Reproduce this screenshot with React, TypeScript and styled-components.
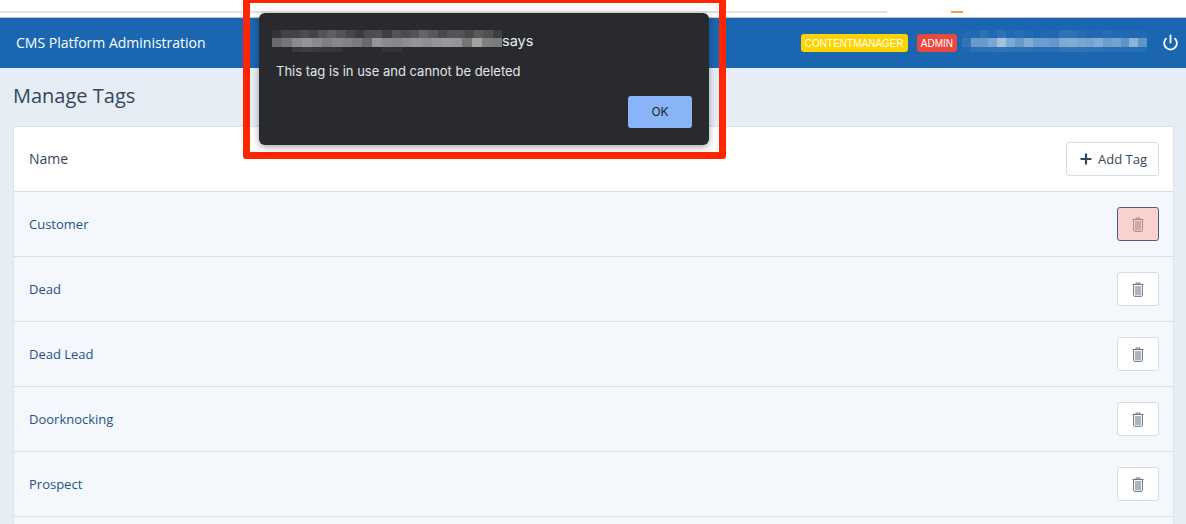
import React from 'react';
import styled, { createGlobalStyle } from 'styled-components';
import { Plus, Power } from 'lucide-react';

const tags = ['Customer', 'Dead', 'Dead Lead', 'Doorknocking', 'Prospect'];

const topBlur = [.05, .12, .12, .16, .12, .2, .25, .2, .14, .08, .16, .18, .1, .2, .16, .2, .28, .22, .14, .2, .2, .14, .22, .18, .1];
const midBlur = [.3, .36, .46, .5, .46, .4, .44, .42, .38, .3, .5, .46, .44, .48, .5, .48, .5, .52, .5, .36, .56, .4, .38];
const lowBlur = [0, 0, .08, .1, .08, .06, .06, 0, 0, 0, 0, .05, .05, 0, 0, 0, 0, 0, 0, 0, 0, 0, 0];
const userTop = [.03, .03, .08, .03, .08, .03, .05, .03, 0, .03, .03, .08, .08, .05, .03, .03, .05, .03, .03, .03, .03];
const userMid = [.1, .34, .34, .42, .6, .44, .34, .46, .36, .36, .32, .44, .46, .42, .4, .46, .36, .4, .3, .5, .3];
const userLow = [.03, .08, .08, .08, .1, .08, .08, .08, .06, .06, .06, .1, .1, .1, .08, .08, .06, .06, .06, .06, .06];

const GlobalStyle = createGlobalStyle`
    html, body {
        margin: 0;
        height: 524px;
        overflow: hidden;
        background: #e6edf5;
        font-family: "Open Sans", "Liberation Sans", sans-serif;
    }
`;

const Page = styled.div`
    position: relative;
    width: 1186px;
    height: 524px;
    overflow: hidden;
`;

const BrowserStrip = styled.div`
    height: 18px;
    background: #fff;
    border-bottom: 1px solid #c9c9c9;
    padding-top: 11px;
    box-sizing: border-box;
    display: flex;
    align-items: flex-start;
`;

const StripLine = styled.div`
    width: 887px;
    height: 2px;
    background: #e2e2e2;
`;

const StripAccent = styled.div`
    width: 12px;
    height: 2px;
    margin-left: 64px;
    background: #f79d4f;
`;

const Header = styled.header`
    height: 50px;
    background: #1a66b1;
    display: flex;
    align-items: center;
    padding: 0 7px 0 16px;
    color: #fff;
`;

const Brand = styled.div`
    flex: 1;
    font-size: 14px;
    font-weight: 400;
    margin-bottom: 1px;
`;

const Badge = styled.span<{ $bg: string; $gap: number }>`
    height: 18px;
    line-height: 19px;
    padding: 0 4px;
    border-radius: 3px;
    background: ${p => p.$bg};
    color: #fff;
    font-family: "Liberation Sans", Arial, sans-serif;
    font-size: 10px;
    margin-right: ${p => p.$gap}px;
`;

const Mosaic = styled.div<{ $w: number; $lift: number }>`
    width: ${p => p.$w}px;
    margin-bottom: ${p => p.$lift}px;
    display: flex;
    flex-direction: column;
    flex: none;
    filter: blur(0.6px);
`;

const MosaicRow = styled.div<{ $h: number }>`
    display: flex;
    height: ${p => p.$h}px;
`;

const MosaicCell = styled.span`
    flex: 1;
    background: #fff;
`;

const PowerButton = styled.div`
    width: 17px;
    height: 17px;
    margin: 0 0 2px 15px;
    display: flex;
`;

const Main = styled.main`
    padding: 0 12px 0 13px;
`;

const Title = styled.h1`
    margin: 0;
    padding-top: 14px;
    height: 58px;
    box-sizing: border-box;
    font-size: 20px;
    line-height: 28px;
    font-weight: 400;
    color: #33475b;
`;

const Card = styled.section`
    min-height: 420px;
    background: #f4f7fb;
    border: 1px solid #dbe2ea;
    border-bottom: none;
`;

const CardHead = styled.div`
    height: 64px;
    background: #fff;
    border-bottom: 1px solid #d8dfe7;
    display: flex;
    align-items: center;
    justify-content: space-between;
    padding: 0 14px 0 15px;
    font-size: 14px;
    line-height: 18px;
    color: #33475b;
`;

const Row = styled.div`
    height: 64px;
    border-bottom: 1px solid #d8dfe7;
    display: flex;
    align-items: center;
    justify-content: space-between;
    padding: 0 14px 0 15px;
`;

const TagLink = styled.a`
    font-size: 13px;
    color: #1d5389;
`;

const AddButton = styled.button`
    width: 93px;
    height: 34px;
    padding: 0;
    background: #fff;
    border: 1px solid #d5dce4;
    border-radius: 3px;
    display: flex;
    align-items: center;
    justify-content: center;
    gap: 4px;
    color: #33475b;
    font-family: inherit;
    font-size: 13px;
`;

const DeleteButton = styled.button<{ $active?: boolean }>`
    width: 42px;
    height: 34px;
    padding: 0;
    background: ${p => (p.$active ? '#f9d2cd' : '#fff')};
    border: 1px solid ${p => (p.$active ? '#46598f' : '#d5dce4')};
    border-radius: 3px;
    display: flex;
    align-items: center;
    justify-content: center;
    color: ${p => (p.$active ? '#a08a8e' : '#6b7785')};
`;

const Callout = styled.div`
    position: absolute;
    left: 243px;
    top: -4px;
    width: 483px;
    height: 163px;
    box-sizing: border-box;
    border: 7px solid #ff2600;
    border-radius: 3px;
`;

const Dialog = styled.div`
    position: absolute;
    left: 259px;
    top: 13px;
    width: 450px;
    height: 132px;
    box-sizing: border-box;
    padding: 17px 17px 17px 13px;
    background: #292a2d;
    border-radius: 6px;
    box-shadow: 0 2px 7px rgba(0, 0, 0, .35);
    color: #e8eaed;
    display: flex;
    flex-direction: column;
`;

const DialogTitle = styled.div`
    display: flex;
    align-items: flex-start;
    height: 22px;
    font-size: 14.5px;
    line-height: 22px;
    font-family: Inter, "Liberation Sans", sans-serif;
`;

const DialogText = styled.div`
    margin: 10px 0 0 4px;
    font-family: Inter, "Liberation Sans", sans-serif;
    font-size: 13px;
    line-height: 18px;
    color: #e3e5e8;
`;

const DialogActions = styled.div`
    margin-top: auto;
    display: flex;
    justify-content: flex-end;
`;

const OkButton = styled.button`
    width: 64px;
    height: 32px;
    padding: 0 0 1px;
    border: none;
    border-radius: 3px;
    background: #8ab4f8;
    color: #202124;
    font-family: Inter, "Liberation Sans", sans-serif;
    font-size: 12px;
`;

const TrashIcon = () => (
    <svg width="12" height="15" viewBox="0 0 12 15">
        <path d="M0.5 2.5h11" stroke="currentColor" strokeWidth="1" />
        <path d="M4 2.3V1h4v1.3" fill="none" stroke="currentColor" strokeWidth="1" />
        <path d="M1.6 3v10.2c0 .7.5 1.2 1.2 1.2h6.4c.7 0 1.2-.5 1.2-1.2V3" fill="none" stroke="currentColor" strokeWidth="1" />
        <path d="M3 4h6v9.2H3z" fill="currentColor" opacity=".55" />
    </svg>
);

type BlurProps = { width: number; lift?: number; top: number[]; mid: number[]; low: number[] };

// blurred out text from the screenshot
const Blur = ({ width, lift = 0, top, mid, low }: BlurProps) => (
    <Mosaic $w={width} $lift={lift}>
        <MosaicRow $h={8}>
            {top.map((o, i) => <MosaicCell key={i} style={{ opacity: o }} />)}
        </MosaicRow>
        <MosaicRow $h={9}>
            {mid.map((o, i) => <MosaicCell key={i} style={{ opacity: o }} />)}
        </MosaicRow>
        <MosaicRow $h={5}>
            {low.map((o, i) => <MosaicCell key={i} style={{ opacity: o }} />)}
        </MosaicRow>
    </Mosaic>
);

export default function App() {
    return (
        <Page>
            <GlobalStyle />
            <BrowserStrip>
                <StripLine />
                <StripAccent />
            </BrowserStrip>
            <Header>
                <Brand>CMS Platform Administration</Brand>
                <Badge $bg="#fdd400" $gap={9}>CONTENTMANAGER</Badge>
                <Badge $bg="#e8483f" $gap={5}>ADMIN</Badge>
                <Blur width={185} lift={4} top={userTop} mid={userMid} low={userLow} />
                <PowerButton>
                    <Power size={17} strokeWidth={2.6} color="#fff" />
                </PowerButton>
            </Header>
            <Main>
                <Title>Manage Tags</Title>
                <Card>
                    <CardHead>
                        <span>Name</span>
                        <AddButton>
                            <Plus size={16} strokeWidth={3.2} />
                            Add Tag
                        </AddButton>
                    </CardHead>
                    {tags.map((tag, i) => (
                        <Row key={tag}>
                            <TagLink>{tag}</TagLink>
                            <DeleteButton $active={i === 0}>
                                <TrashIcon />
                            </DeleteButton>
                        </Row>
                    ))}
                </Card>
            </Main>
            <Callout />
            <Dialog>
                <DialogTitle>
                    <Blur width={230} top={topBlur} mid={midBlur} low={lowBlur} />
                    says
                </DialogTitle>
                <DialogText>This tag is in use and cannot be deleted</DialogText>
                <DialogActions>
                    <OkButton>OK</OkButton>
                </DialogActions>
            </Dialog>
        </Page>
    );
}
